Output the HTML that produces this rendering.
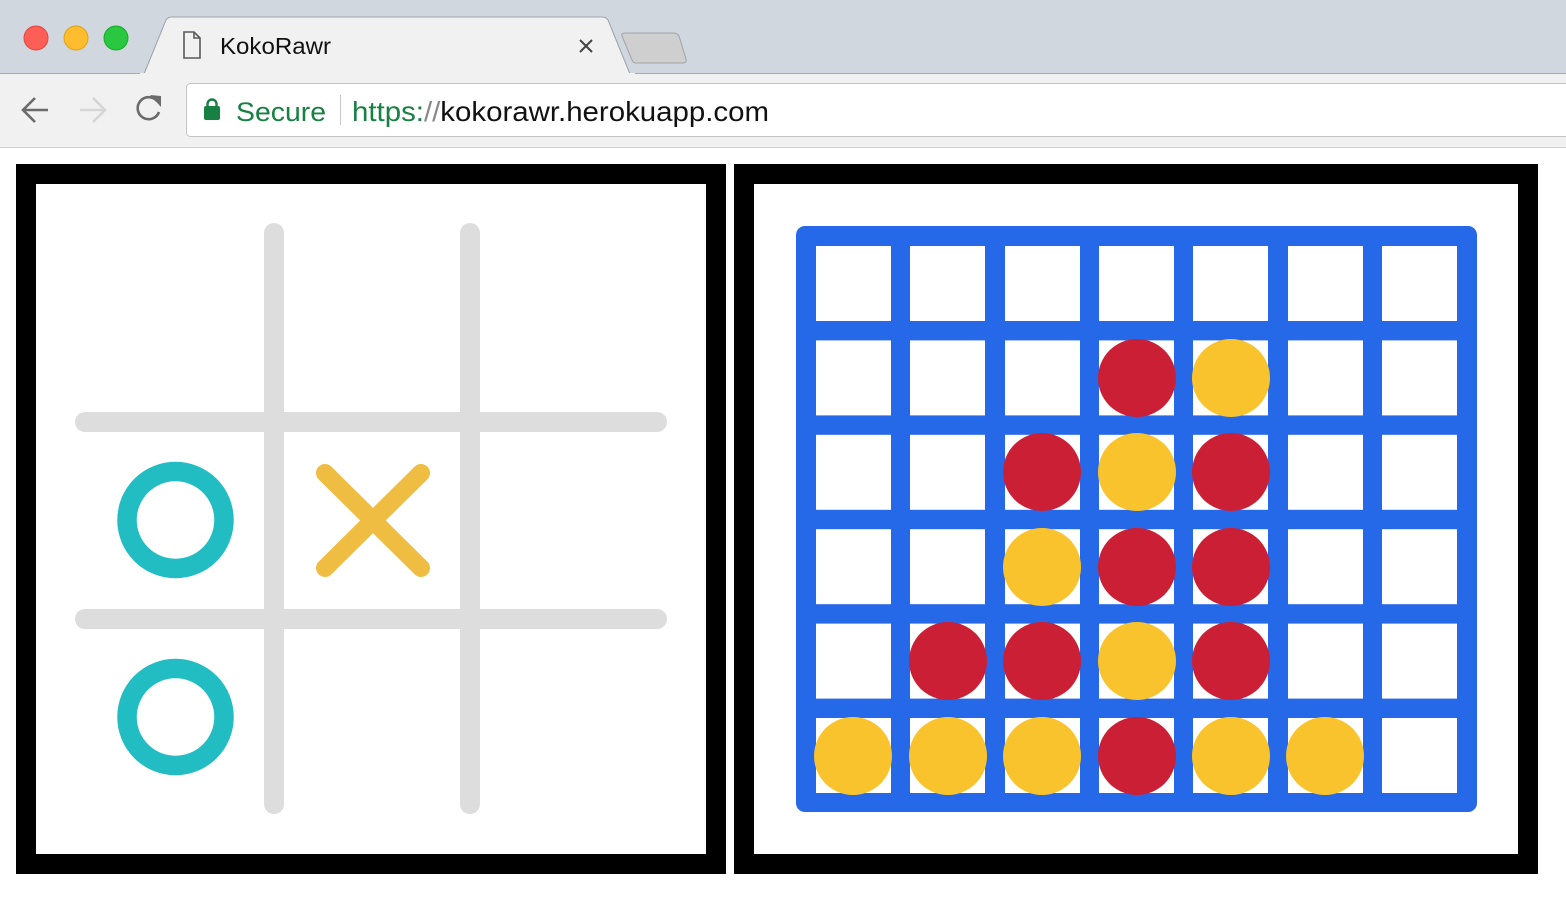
<!DOCTYPE html>
<html><head><meta charset="utf-8"><style>
html,body{margin:0;padding:0;width:1566px;height:920px;overflow:hidden;background:#fff}
svg{display:block}
text{font-family:"Liberation Sans","DejaVu Sans",sans-serif}
</style></head><body>
<svg width="1566" height="920" viewBox="0 0 1566 920" xmlns="http://www.w3.org/2000/svg">
<rect x="0" y="0" width="1566" height="74" fill="#d0d7df"/>
<line x1="0" y1="73.5" x2="1566" y2="73.5" stroke="#a6abb2"/>
<rect x="0" y="74" width="1566" height="73" fill="#f1f1f1"/>
<line x1="0" y1="147.5" x2="1566" y2="147.5" stroke="#d0d0d0"/>
<path d="M144 74 L166 20 Q168 17 172 17 L602 17 Q606 17 608 20 L630 74 Z" fill="#f1f1f1" stroke="#9ea3a9"/>
<rect x="140" y="73" width="495" height="3" fill="#f1f1f1"/>
<path d="M622 36 Q621 33 625 33 L674 33 Q677 33 679 36 L686 59 Q687 63 683 63 L636 63 Q633 63 632 60 Z" fill="#cfcfcf" stroke="#a3a3a3"/>
<circle cx="36" cy="38" r="12" fill="#fd5f57" stroke="#e2463f" stroke-width="1"/>
<circle cx="76" cy="38" r="12" fill="#febc2e" stroke="#e1a116" stroke-width="1"/>
<circle cx="116" cy="38" r="12" fill="#29c840" stroke="#16ab29" stroke-width="1"/>
<path d="M184 32 L194 32 L200 38 L200 58 L184 58 Z M194 32 L194 38 L200 38" fill="none" stroke="#5a5a5a" stroke-width="1.6"/>
<text x="220" y="54" font-size="23" fill="#111" textLength="111" lengthAdjust="spacingAndGlyphs">KokoRawr</text>
<path d="M580 40 L592 52 M592 40 L580 52" stroke="#444" stroke-width="2"/>
<path d="M48 110 L24 110 M35 98 L23 110 L35 122" fill="none" stroke="#6b6b6b" stroke-width="2.6"/>
<path d="M80 110 L104 110 M93 98 L105 110 L93 122" fill="none" stroke="#d6d6d6" stroke-width="2.6"/>
<path d="M157 101 A11 11 0 1 0 159 112" fill="none" stroke="#6b6b6b" stroke-width="2.6"/>
<path d="M150 95 L161 96 L161 107 Z" fill="#6b6b6b"/>
<rect x="186.5" y="83.5" width="1400" height="53" rx="4" fill="#fff" stroke="#c3c3c3"/>
<path d="M207.5 107 L207.5 104 A4.5 4.5 0 0 1 216.5 104 L216.5 107" fill="none" stroke="#178043" stroke-width="2.4"/>
<rect x="204" y="106" width="16" height="14" rx="2" fill="#178043"/>
<text x="236" y="121" font-size="27" fill="#178043" textLength="90" lengthAdjust="spacingAndGlyphs">Secure</text>
<line x1="340.5" y1="95" x2="340.5" y2="125" stroke="#c8c8c8"/>
<text x="352" y="121" font-size="28" fill="#178043" textLength="417" lengthAdjust="spacingAndGlyphs">https:<tspan fill="#888">//</tspan><tspan fill="#111">kokorawr.herokuapp.com</tspan></text>

<rect x="26" y="174" width="690" height="690" fill="#fff" stroke="#000" stroke-width="20"/>
<g stroke="#dddddd" stroke-width="20" stroke-linecap="round">
<line x1="274" y1="233" x2="274" y2="804"/>
<line x1="470" y1="233" x2="470" y2="804"/>
<line x1="85" y1="422" x2="657" y2="422"/>
<line x1="85" y1="619" x2="657" y2="619"/>
</g>
<circle cx="175.5" cy="520" r="48.5" fill="none" stroke="#22bdc3" stroke-width="19.5"/>
<circle cx="175.5" cy="717" r="48.5" fill="none" stroke="#22bdc3" stroke-width="19.5"/>
<path d="M325 473 L421 568 M421 473 L325 568" stroke="#f0bd43" stroke-width="18" stroke-linecap="round"/>

<rect x="744" y="174" width="784" height="690" fill="#fff" stroke="#000" stroke-width="20"/>
<rect x="796" y="226" width="681" height="586" rx="9" fill="#2568e8"/>
<g fill="#fff">
<g id="row">
<rect x="816" y="246" width="75" height="75"/><rect x="910" y="246" width="75" height="75"/><rect x="1005" y="246" width="75" height="75"/><rect x="1099" y="246" width="75" height="75"/><rect x="1193" y="246" width="75" height="75"/><rect x="1288" y="246" width="75" height="75"/><rect x="1382" y="246" width="75" height="75"/>
</g>
<use href="#row" y="94.4"/><use href="#row" y="188.8"/><use href="#row" y="283.2"/><use href="#row" y="377.6"/><use href="#row" y="472"/>
</g>
<g>
<circle cx="1137" cy="378" r="39" fill="#cb1f35"/>
<circle cx="1231" cy="378" r="39" fill="#f9c32d"/>
<circle cx="1042" cy="472" r="39" fill="#cb1f35"/>
<circle cx="1137" cy="472" r="39" fill="#f9c32d"/>
<circle cx="1231" cy="472" r="39" fill="#cb1f35"/>
<circle cx="1042" cy="567" r="39" fill="#f9c32d"/>
<circle cx="1137" cy="567" r="39" fill="#cb1f35"/>
<circle cx="1231" cy="567" r="39" fill="#cb1f35"/>
<circle cx="948" cy="661" r="39" fill="#cb1f35"/>
<circle cx="1042" cy="661" r="39" fill="#cb1f35"/>
<circle cx="1137" cy="661" r="39" fill="#f9c32d"/>
<circle cx="1231" cy="661" r="39" fill="#cb1f35"/>
<circle cx="853" cy="756" r="39" fill="#f9c32d"/>
<circle cx="948" cy="756" r="39" fill="#f9c32d"/>
<circle cx="1042" cy="756" r="39" fill="#f9c32d"/>
<circle cx="1137" cy="756" r="39" fill="#cb1f35"/>
<circle cx="1231" cy="756" r="39" fill="#f9c32d"/>
<circle cx="1325" cy="756" r="39" fill="#f9c32d"/>
</g>
</svg>
</body></html>
